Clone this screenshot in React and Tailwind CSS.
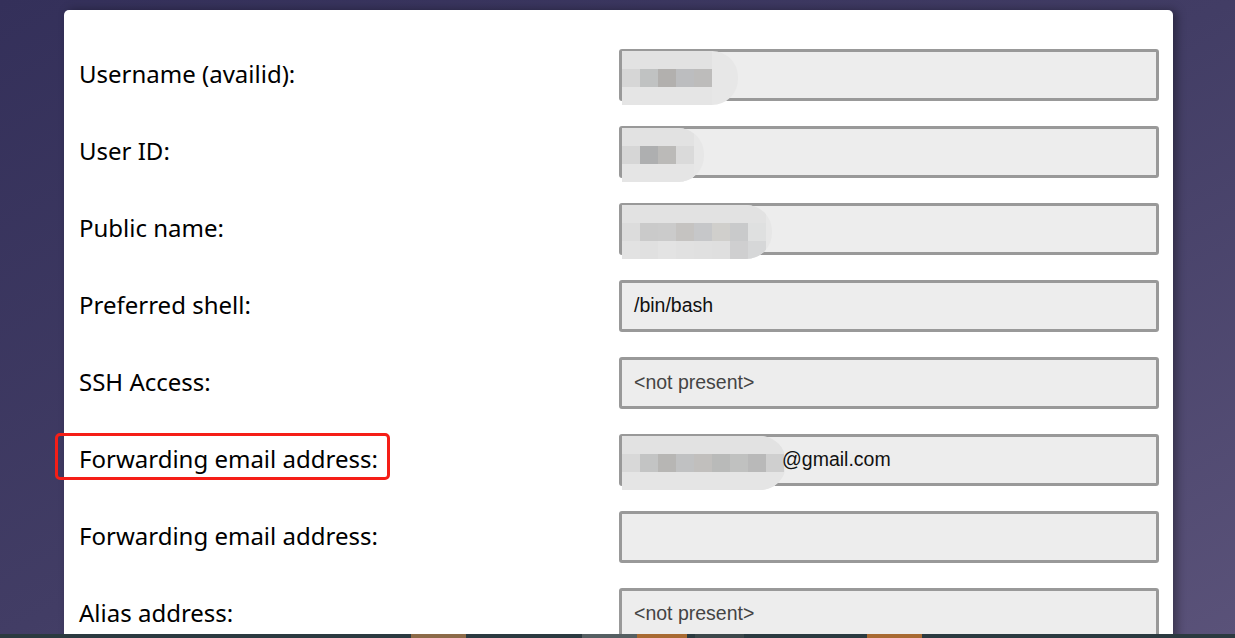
import React from "react";

function Blur({ cols, width, tint = [] }) {
  return (
    <div
      className="absolute left-0 top-[-1px] h-[54px] rounded-r-[26px] bg-[#e7e7e7] overflow-hidden"
      style={{ width }}
    >
      <div className="flex flex-col">
        <div className="flex h-[18px]">
          {cols.map((c, i) => (
            <div key={i} className="w-[18px] h-[18px]" style={{ background: tint[0]?.[i] || "#e2e2e2" }} />
          ))}
        </div>
        <div className="flex h-[18px]">
          {cols.map((c, i) => (
            <div key={i} className="w-[18px] h-[18px]" style={{ background: c }} />
          ))}
        </div>
        <div className="flex h-[18px]">
          {cols.map((c, i) => (
            <div key={i} className="w-[18px] h-[18px]" style={{ background: tint[2]?.[i] || "#e5e5e5" }} />
          ))}
        </div>
      </div>
    </div>
  );
}

function Row({ label, value, muted, blur, boxed }) {
  return (
    <div className="flex items-center h-[52px]">
      <div className="w-[540px] relative">
        <span className="text-[24px] text-black leading-none" style={{ fontFamily: '"Noto Sans", "Open Sans", sans-serif' }}>
          {label}
        </span>
        {boxed && (
          <div className="absolute left-[-24px] top-[-14px] w-[335px] h-[47px] border-[3px] border-[#f51e17] rounded-[5px]" />
        )}
      </div>
      <div className="relative w-[540px] h-[52px] border-[3px] border-[#999999] rounded-[3px] bg-[#ededed] flex items-center pl-[12px]">
        {blur}
        <span
          className={`relative text-[19.5px] ${muted ? "text-[#444]" : "text-[#111]"}`}
          style={{ fontFamily: '"Liberation Sans", Arial, sans-serif' }}
        >
          {value}
        </span>
      </div>
    </div>
  );
}

export default function App() {
  return (
    <div className="w-[1235px] h-[638px] overflow-hidden flex flex-col bg-gradient-to-br from-[#34305a] via-[#423d65] to-[#5a5279]">
      <div className="flex-1 flex pt-[10px] pl-[64px] overflow-hidden">
        <div className="w-[1109px] h-[700px] bg-white rounded-[5px] shadow-[4px_0_10px_rgba(0,0,0,0.35)] pt-[39px] pl-[15px] flex flex-col gap-[25px]">
          <Row
            label="Username (availid):"
            value=""
            blur={<Blur width="116px" cols={["#d6d6d6", "#c0c2c2", "#b2b0ae", "#bcbdbf", "#bdbcbb"]} />}
          />
          <Row
            label="User ID:"
            value=""
            blur={<Blur width="82px" cols={["#d6d6d6", "#aeafb0", "#bbbab8", "#dadada"]} />}
          />
          <Row
            label="Public name:"
            value=""
            blur={<Blur width="150px" cols={["#dcdcdc", "#cacaca", "#cbcbcb", "#c5c3c1", "#c6c7c9", "#d0cfcc", "#c9cacb", "#dfe0e0"]} tint={[null, null, ["#e2e2e2","#e0e0e0","#e3e3e3","#e1e1e1","#e0e0e0","#dfdfdf","#cfcfd0","#d6d7d8"]]} />}
          />
          <Row label="Preferred shell:" value="/bin/bash" />
          <Row label="SSH Access:" value="<not present>" muted />
          <Row
            label="Forwarding email address:"
            value={<span className="pl-[148px]">@gmail.com</span>}
            boxed
            blur={<Blur width="164px" cols={["#d8d8d8", "#c3c4c4", "#b7b6b4", "#c0c1c2", "#c1bfbd", "#b9bab9", "#c0c1c0", "#b9b9b9", "#cfcfcf"]} />}
          />
          <Row label="Forwarding email address:" value="" />
          <Row label="Alias address:" value="<not present>" muted />
        </div>
      </div>
      <div className="h-[4px] flex bg-[#2b3a40] shrink-0">
        <div className="w-[411px]" />
        <div className="w-[55px] bg-[#8c6a48]" />
        <div className="w-[116px]" />
        <div className="w-[55px] bg-[#555f62]" />
        <div className="w-[50px] bg-[#a86a32]" />
        <div className="w-[8px]" />
        <div className="w-[49px] bg-[#3c474a]" />
        <div className="w-[123px]" />
        <div className="w-[55px] bg-[#a86a32]" />
      </div>
    </div>
  );
}
